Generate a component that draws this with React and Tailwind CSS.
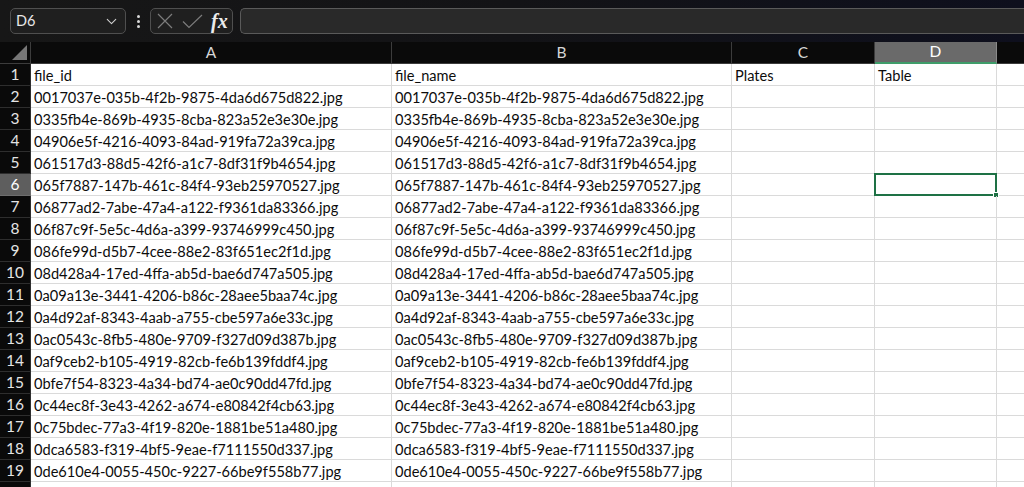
import { ChevronDown } from 'lucide-react'

const ids = [
  '0017037e-035b-4f2b-9875-4da6d675d822.jpg',
  '0335fb4e-869b-4935-8cba-823a52e3e30e.jpg',
  '04906e5f-4216-4093-84ad-919fa72a39ca.jpg',
  '061517d3-88d5-42f6-a1c7-8df31f9b4654.jpg',
  '065f7887-147b-461c-84f4-93eb25970527.jpg',
  '06877ad2-7abe-47a4-a122-f9361da83366.jpg',
  '06f87c9f-5e5c-4d6a-a399-93746999c450.jpg',
  '086fe99d-d5b7-4cee-88e2-83f651ec2f1d.jpg',
  '08d428a4-17ed-4ffa-ab5d-bae6d747a505.jpg',
  '0a09a13e-3441-4206-b86c-28aee5baa74c.jpg',
  '0a4d92af-8343-4aab-a755-cbe597a6e33c.jpg',
  '0ac0543c-8fb5-480e-9709-f327d09d387b.jpg',
  '0af9ceb2-b105-4919-82cb-fe6b139fddf4.jpg',
  '0bfe7f54-8323-4a34-bd74-ae0c90dd47fd.jpg',
  '0c44ec8f-3e43-4262-a674-e80842f4cb63.jpg',
  '0c75bdec-77a3-4f19-820e-1881be51a480.jpg',
  '0dca6583-f319-4bf5-9eae-f7111550d337.jpg',
  '0de610e4-0055-450c-9227-66be9f558b77.jpg',
]

const rows = [['file_id', 'file_name', 'Plates', 'Table'], ...ids.map(id => [id, id, '', '']), ['', '', '', '']]
const cols = ['A', 'B', 'C', 'D']

export default function App() {
  return (
    <div className="w-[1024px] h-[487px] overflow-hidden bg-white flex flex-col font-['Lato',sans-serif]">
      {/* formula bar */}
      <div className="h-[42px] shrink-0 flex items-start pt-[8px] bg-gradient-to-r from-[#171717] via-[#131316] to-[#0e0f1d]">
        <div className="ml-[10px] w-[116px] h-[26px] rounded-[5px] border border-[#4f4f4f] bg-[#1f1f1f] flex items-center justify-between pl-[5px] pr-[5px]">
          <span className="text-[#e8e8e8] text-[14.5px]">D6</span>
          <ChevronDown size={17} strokeWidth={1.5} className="text-[#d0d0d0]" />
        </div>
        <div className="w-[24px] h-[26px] flex flex-col items-center justify-center gap-[2px]">
          <span className="w-[3px] h-[3px] rounded-full bg-[#d8d8d8]" />
          <span className="w-[3px] h-[3px] rounded-full bg-[#d8d8d8]" />
          <span className="w-[3px] h-[3px] rounded-full bg-[#d8d8d8]" />
        </div>
        <div className="w-[83px] h-[26px] rounded-[5px] border border-[#4f4f4f] bg-[#1f1f1f] flex items-center pl-[6px]">
          <svg width="16" height="16" viewBox="0 0 16 16" className="text-[#7c7c7c]">
            <path d="M1 1L15 15M15 1L1 15" stroke="currentColor" strokeWidth="1.2" fill="none" />
          </svg>
          <svg width="21" height="15" viewBox="0 0 21 15" className="ml-[9px] text-[#7c7c7c]">
            <path d="M1 7.5L7 13.5L20 1" stroke="currentColor" strokeWidth="1.2" fill="none" />
          </svg>
          <span className="ml-[8px] text-[#ececec] italic font-bold text-[20px] leading-none font-['Liberation_Serif',serif]">fx</span>
        </div>
        <div className="ml-[7px] flex-1 h-[26px] rounded-l-[5px] border border-r-0 border-[#5a5a5a] bg-[#292929]" />
      </div>

      {/* grid */}
      <div className="flex-1 grid grid-cols-[31px_361px_340px_143px_122px_1fr] auto-rows-[22px] text-[14.6px] leading-none">
        <div className="bg-[#0a0a0a] border-r border-b border-[#3c3c3c] relative">
          <div className="absolute right-[3px] bottom-[3px] w-0 h-0 border-l-[15px] border-l-transparent border-b-[15px] border-b-[#777]" />
        </div>
        {cols.map(c => (
          <div
            key={c}
            className={
              'flex items-center justify-center border-r text-[15.5px] ' +
              (c === 'D'
                ? 'bg-[#6a6a6a] text-white border-[#8a8a8a] border-b-2 border-b-[#3f9d6a]'
                : 'bg-[#0a0a0a] text-[#d6d6d6] border-[#3c3c3c] border-b')
            }
          >
            {c}
          </div>
        ))}
        <div className="bg-[#0a0a0a] border-b border-[#3c3c3c]" />

        {rows.map((r, i) => {
          const n = i + 1
          const sel = n === 6
          return [
            <div
              key={'h' + n}
              className={
                'flex items-center justify-center border-r border-b text-[15.5px] ' +
                (sel ? 'bg-[#5e5e5e] text-white border-[#6e6e6e]' : 'bg-[#0a0a0a] text-[#e4e4e4] border-[#2e2e2e]')
              }
            >
              {n <= 19 ? n : ''}
            </div>,
            ...r.map((v, j) => (
              <div
                key={n + '-' + j}
                className="relative flex items-center pl-[3px] pt-[3px] border-r border-b border-[#dadada] text-[#0c0c0c] whitespace-nowrap"
              >
                {v}
                {sel && j === 3 && (
                  <div className="absolute -left-[1px] -top-[1px] -right-[1px] -bottom-[1px] border-2 border-[#1e7145]">
                    <div className="absolute -right-[4px] -bottom-[4px] w-[6px] h-[6px] bg-[#1e7145] border border-white" />
                  </div>
                )}
              </div>
            )),
            <div key={'e' + n} className="border-b border-[#dadada]" />,
          ]
        })}
      </div>
    </div>
  )
}
